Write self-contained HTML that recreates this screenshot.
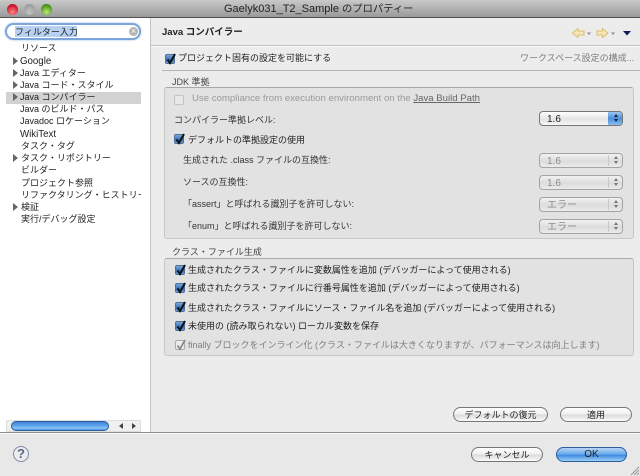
<!DOCTYPE html>
<html lang="ja"><head><meta charset="utf-8">
<style>
html,body{margin:0;padding:0}
body{width:640px;height:476px;overflow:hidden;position:relative;background:#ececec;font-family:"Liberation Sans","Noto Sans CJK JP",sans-serif;font-size:9px;color:#222}
.a{position:absolute}
.t{position:absolute;white-space:nowrap;line-height:12px;height:12px;margin-top:2px;filter:blur(.25px)}
.g{color:#7d7d7d}
.grp{position:absolute;background:#e2e2e2;border:1px solid #c6c6c6;border-top-color:#a8a8a8;border-radius:3px;box-sizing:border-box}
.cb{position:absolute;width:8px;height:8px;border-radius:2px;border:1px solid #4c6f9c;background:linear-gradient(#7fa7d8,#2f6fb8 60%,#6fa3dc)}
.cb svg,.cb2 svg{position:absolute;left:-1px;top:-3px}
.cb2{position:absolute;width:8px;height:8px;border-radius:2px;border:1px solid #aaa;background:#ececec}
.sel{position:absolute;width:84px;height:15px;left:539px;border:1px solid #a4a4a4;border-radius:4px;box-sizing:border-box;background:linear-gradient(#f2f2f2,#dcdcdc 55%,#ebebeb);color:#8c8c8c;font-size:10px;line-height:14px;padding:1px 0 0 7px;filter:blur(.2px)}
.sel u{position:absolute;right:13px;top:1px;width:1px;height:11px;background:#c8c8c8}
.sel i{position:absolute;right:4px;top:2px;width:0;height:0;border-left:2.500px solid transparent;border-right:2.500px solid transparent;border-bottom:3px solid #777}
.sel b{position:absolute;right:4px;top:7px;width:0;height:0;border-left:2.500px solid transparent;border-right:2.500px solid transparent;border-top:3px solid #777}
.btn{position:absolute;height:15px;box-sizing:border-box;border:1px solid #777;border-radius:8px;background:linear-gradient(#fff,#f0f0f0 45%,#dcdcdc 55%,#fbfbfb);text-align:center;line-height:14px;font-size:9px;color:#222;filter:blur(.2px)}
.tri{position:absolute;left:13px;width:0;height:0;border-left:5.500px solid #666;border-top:4px solid transparent;border-bottom:4px solid transparent}
.l{font-size:9.700px}
</style></head><body>
<div class="a" style="left:0;top:0;width:640px;height:18px;background:linear-gradient(#c9c9c9,#9a9a9a);border-bottom:1px solid #505050;box-sizing:border-box"></div>
<div class="a" style="left:7px;top:4px;width:11px;height:11px;border-radius:50%;background:radial-gradient(circle at 50% 75%,#f88,#d01a30 65%,#8a1020)"></div>
<div class="a" style="left:24px;top:4px;width:11px;height:11px;border-radius:50%;background:radial-gradient(circle at 50% 75%,#c4c4c4,#8f8f8f)"></div>
<div class="a" style="left:41px;top:4px;width:11px;height:11px;border-radius:50%;background:radial-gradient(circle at 50% 75%,#bdea7a,#4f9a1e 65%,#2f6f10)"></div>
<div class="t" style="left:224px;top:1px;font-size:11px;color:#222">Gaelyk031_T2_Sample <span style="font-size:10.300px">のプロパティー</span></div>

<div class="a" style="left:0;top:18px;width:150px;height:414px;background:#fff"></div>
<div class="a" style="left:150px;top:18px;width:1px;height:414px;background:#c4c4c4"></div>
<div class="a" style="left:5px;top:23px;width:136px;height:17px;border:2px solid #7ba4d8;border-radius:9px;box-sizing:border-box;background:#fff;box-shadow:0 0 2px #9dbde6"></div>
<div class="a" style="left:15px;top:26px;width:62px;height:11px;background:#b6d1f2"></div>
<div class="t" style="left:15px;top:24px">フィルター入力</div>
<div class="a" style="left:129px;top:27px;width:9px;height:9px;border-radius:50%;background:#b4b4b4;color:#fff;font-size:9px;line-height:9px;text-align:center">×</div>

<div class="a" style="left:6px;top:92px;width:135px;height:12px;background:#d2d2d2"></div>
<div class="t" style="left:21px;top:40px">リソース</div>
<div class="tri" style="top:57px"></div><div class="t" style="left:20px;top:53px"><span class="l">Google</span></div>
<div class="tri" style="top:69px"></div><div class="t" style="left:20px;top:65px">Java エディター</div>
<div class="tri" style="top:81px"></div><div class="t" style="left:20px;top:77px">Java コード・スタイル</div>
<div class="tri" style="top:93px"></div><div class="t" style="left:20px;top:89px">Java コンパイラー</div>
<div class="t" style="left:20px;top:101px">Java のビルド・パス</div>
<div class="t" style="left:20px;top:113px">Javadoc ロケーション</div>
<div class="t" style="left:20px;top:126px"><span class="l">WikiText</span></div>
<div class="t" style="left:21px;top:138px">タスク・タグ</div>
<div class="tri" style="top:154px"></div><div class="t" style="left:21px;top:150px">タスク・リポジトリー</div>
<div class="t" style="left:21px;top:162px">ビルダー</div>
<div class="t" style="left:21px;top:175px">プロジェクト参照</div>
<div class="t" style="left:21px;top:187px;width:120px;overflow:hidden">リファクタリング・ヒストリー</div>
<div class="tri" style="top:203px"></div><div class="t" style="left:21px;top:199px">検証</div>
<div class="t" style="left:21px;top:211px">実行/デバッグ設定</div>

<div class="a" style="left:6px;top:420px;width:135px;height:12px;background:#f0f0f0;border:1px solid #ddd;box-sizing:border-box"></div>
<div class="a" style="left:11px;top:421px;width:98px;height:10px;border-radius:5px;background:linear-gradient(#3f84d8,#5fa6ec 50%,#8cc6f4 75%,#4f94e0);border:1px solid #2c5f9e;box-sizing:border-box"></div>
<div class="a" style="left:119px;top:423px;width:0;height:0;border-right:4px solid #444;border-top:3px solid transparent;border-bottom:3px solid transparent"></div>
<div class="a" style="left:132px;top:423px;width:0;height:0;border-left:4px solid #444;border-top:3px solid transparent;border-bottom:3px solid transparent"></div>

<div class="t" style="left:162px;top:25px;font-weight:bold;font-size:9.500px">Java コンパイラー</div>
<div class="a" style="left:151px;top:45px;width:489px;height:1px;background:#c2c2c2"></div>
<div class="a" style="left:151px;top:46px;width:489px;height:1px;background:#f8f8f8"></div>
<svg class="a" style="left:570px;top:26px" width="70" height="14" viewBox="0 0 70 14">
<path d="M2.500 7 L8 2.500 V5 H14 V9 H8 V11.500 Z" fill="#f6e7b4" stroke="#d8be72"/>
<path d="M17 6.500 h4 l-2 2.500z" fill="#888"/>
<path d="M38 7 L32.500 2.500 V5 H27 V9 H32.500 V11.500 Z" fill="#f6e7b4" stroke="#d8be72"/>
<path d="M41 6.500 h4 l-2 2.500z" fill="#888"/>
<path d="M53 5 h8 l-4 4.500z" fill="#141a60"/>
</svg>

<div class="cb" style="left:165px;top:54px"><svg width="12" height="14"><path d="M2.500 7.500 L5 11 L10 2" fill="none" stroke="#111" stroke-width="2"/></svg></div>
<div class="t" style="left:178px;top:50px">プロジェクト固有の設定を可能にする</div>
<div class="t g" style="left:520px;top:50px">ワークスペース設定の構成...</div>
<div class="a" style="left:162px;top:70px;width:478px;height:1px;background:#b4b4b4"></div>

<div class="t" style="left:172px;top:74px;color:#444">JDK 準拠</div>
<div class="grp" style="left:164px;top:87px;width:470px;height:152px"></div>
<div class="cb2" style="left:174px;top:95px;background:#e8e8e8;border-color:#c4c4c4"></div>
<div class="t" style="left:192px;top:91px;color:#9a9a9a;font-size:9.600px">Use compliance from execution environment on the <span style="color:#666;text-decoration:underline">Java Build Path</span></div>
<div class="t" style="left:174px;top:112px;color:#333">コンパイラー準拠レベル:</div>
<div class="sel" style="top:111px;color:#222;border-color:#777;background:linear-gradient(#fff,#e4e4e4 55%,#f6f6f6)">1.6<span class="a" style="right:0;top:0;width:14px;height:13px;border-radius:0 3px 3px 0;background:linear-gradient(#9cc4ee,#4a8fdc 50%,#8abcee)"></span><i style="border-bottom-color:#123"></i><b style="border-top-color:#123"></b></div>

<div class="cb" style="left:174px;top:134px"><svg width="12" height="14"><path d="M2.500 7.500 L5 11 L10 2" fill="none" stroke="#111" stroke-width="2"/></svg></div>
<div class="t" style="left:188px;top:132px">デフォルトの準拠設定の使用</div>

<div class="t" style="left:183px;top:152px;color:#333">生成された .class ファイルの互換性:</div>
<div class="sel" style="top:153px">1.6<u></u><i></i><b></b></div>
<div class="t" style="left:183px;top:174px;color:#333">ソースの互換性:</div>
<div class="sel" style="top:175px">1.6<u></u><i></i><b></b></div>
<div class="t" style="left:183px;top:196px;color:#333">「assert」と呼ばれる識別子を許可しない:</div>
<div class="sel" style="top:197px">エラー<u></u><i></i><b></b></div>
<div class="t" style="left:183px;top:218px;color:#333">「enum」と呼ばれる識別子を許可しない:</div>
<div class="sel" style="top:219px">エラー<u></u><i></i><b></b></div>

<div class="t" style="left:172px;top:244px;color:#444">クラス・ファイル生成</div>
<div class="grp" style="left:164px;top:258px;width:470px;height:98px"></div>
<div class="cb" style="left:175px;top:265px"><svg width="12" height="14"><path d="M2.500 7.500 L5 11 L10 2" fill="none" stroke="#111" stroke-width="2"/></svg></div>
<div class="t" style="left:188px;top:262px">生成されたクラス・ファイルに変数属性を追加 (デバッガーによって使用される)</div>
<div class="cb" style="left:175px;top:283px"><svg width="12" height="14"><path d="M2.500 7.500 L5 11 L10 2" fill="none" stroke="#111" stroke-width="2"/></svg></div>
<div class="t" style="left:188px;top:280px">生成されたクラス・ファイルに行番号属性を追加 (デバッガーによって使用される)</div>
<div class="cb" style="left:175px;top:302px"><svg width="12" height="14"><path d="M2.500 7.500 L5 11 L10 2" fill="none" stroke="#111" stroke-width="2"/></svg></div>
<div class="t" style="left:188px;top:300px">生成されたクラス・ファイルにソース・ファイル名を追加 (デバッガーによって使用される)</div>
<div class="cb" style="left:175px;top:321px"><svg width="12" height="14"><path d="M2.500 7.500 L5 11 L10 2" fill="none" stroke="#111" stroke-width="2"/></svg></div>
<div class="t" style="left:188px;top:318px">未使用の (読み取られない) ローカル変数を保存</div>
<div class="cb2" style="left:175px;top:340px"><svg width="12" height="14"><path d="M2.500 7.500 L5 11 L10 2" fill="none" stroke="#888" stroke-width="1.800"/></svg></div>
<div class="t g" style="left:188px;top:337px">finally ブロックをインライン化 (クラス・ファイルは大きくなりますが、パフォーマンスは向上します)</div>

<div class="btn" style="left:453px;top:407px;width:95px">デフォルトの復元</div>
<div class="btn" style="left:560px;top:407px;width:72px">適用</div>

<div class="a" style="left:0;top:432px;width:640px;height:1px;background:#8f8f8f"></div>
<div class="a" style="left:0;top:433px;width:640px;height:43px;background:#e8e8e8;border-top:1px solid #fafafa;box-sizing:border-box"></div>
<div class="a" style="left:13px;top:446px;width:16px;height:16px;box-sizing:border-box;border:1px solid #7f88a8;border-radius:50%;background:#ececec;color:#55658f;font-size:13px;font-weight:bold;line-height:14px;text-align:center">?</div>
<div class="btn" style="left:471px;top:447px;width:72px">キャンセル</div>
<div class="btn" style="left:556px;top:447px;width:71px;border-color:#2a5c9e;background:linear-gradient(#b6d6f6,#6aa8ea 48%,#3f8ae0 55%,#9cd0f8);font-size:10px">OK</div>
<svg class="a" style="left:628px;top:464px" width="12" height="12"><path d="M11 3 L3 11 M11 6 L6 11 M11 9 L9 11" stroke="#999" fill="none"/></svg>
</body></html>
